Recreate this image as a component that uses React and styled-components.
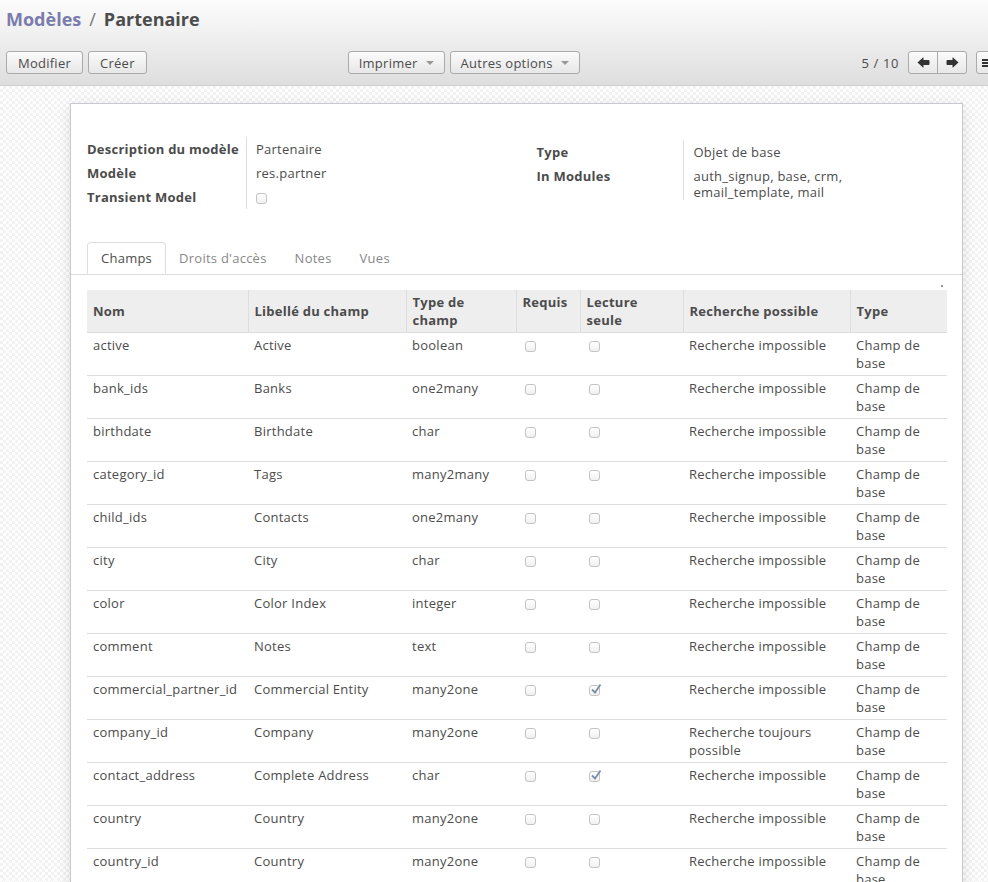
import React from "react";
import styled, { createGlobalStyle } from "styled-components";

const GlobalStyle = createGlobalStyle`
  html, body { margin: 0; padding: 0; }
  body {
    font-family: "Open Sans", "DejaVu Sans", sans-serif;
    font-size: 13px;
    letter-spacing: 0.25px;
    color: #4c4c4c;
    background: #fff;
  }
`;

const Page = styled.div`
  width: 988px;
  height: 882px;
  overflow: hidden;
  display: flex;
  flex-direction: column;
`;

const Header = styled.div`
  height: 86px;
  flex: none;
  box-sizing: border-box;
  background: linear-gradient(#fcfcfc, #dedede);
  border-bottom: 1px solid #cfcfcf;
  padding: 6px 0 0 6px;
`;

const Breadcrumb = styled.div`
  font-size: 18px;
  font-weight: 700;
  line-height: 26px;
  letter-spacing: 0;
  display: flex;
  gap: 8px;
`;

const Crumb = styled.span`
  font-weight: ${({ $sep }) => ($sep ? 400 : 700)};
  color: ${({ $link, $sep }) => ($link ? "#7c7bad" : $sep ? "#777" : "#4c4c4c")};
`;

const Toolbar = styled.div`
  margin-top: 19px;
  display: flex;
  align-items: center;
`;

const Group = styled.div`
  display: flex;
  gap: 5px;
  align-items: center;
  margin-left: ${({ $ml }) => $ml || 0}px;
`;

const Button = styled.button`
  height: 23px;
  box-sizing: border-box;
  padding: 0 ${({ $pad }) => $pad || 11}px;
  font-family: inherit;
  font-size: 13px;
  letter-spacing: 0.25px;
  color: #4c4c4c;
  background: linear-gradient(#fbfbfb, #e7e7e7);
  border: 1px solid #aaa;
  border-radius: 3px;
  display: flex;
  align-items: center;
  gap: 8px;
  cursor: pointer;
`;

const Caret = styled.span`
  width: 0;
  height: 0;
  border-left: 4px solid transparent;
  border-right: 4px solid transparent;
  border-top: 4px solid #999;
  margin-top: 1px;
`;

const Pager = styled.div`
  margin-left: auto;
  display: flex;
  align-items: center;
  gap: 9px;
`;

const PagerText = styled.span`
  font-size: 13px;
  letter-spacing: 0.6px;
  color: #4c4c4c;
`;

const NavGroup = styled.div`
  display: flex;
  height: 23px;
  border: 1px solid #aaa;
  border-radius: 3px;
  overflow: hidden;
  box-sizing: border-box;
  background: linear-gradient(#fbfbfb, #e7e7e7);
`;

const NavBtn = styled.div`
  width: 28px;
  display: flex;
  align-items: center;
  justify-content: center;
  border-left: ${({ $first }) => ($first ? "none" : "1px solid #aaa")};
`;

const ViewBtn = styled.div`
  width: 30px;
  height: 23px;
  box-sizing: border-box;
  border: 1px solid #aaa;
  border-radius: 3px;
  background: linear-gradient(#fbfbfb, #e7e7e7);
  margin-right: -18px;
  display: flex;
  align-items: center;
  padding-left: 5px;
`;

const Body = styled.div`
  flex: 1;
  background-color: #fff;
  background-image: repeating-conic-gradient(#f2f2f2 0 25%, #ffffff 0 50%);
  background-size: 6px 6px;
  padding: 17px 24px 0 70px;
`;

const Sheet = styled.div`
  width: 893px;
  height: 820px;
  box-sizing: border-box;
  background: #fff;
  border: 1px solid #c8c8d0;
  box-shadow: 0 4px 14px rgba(0, 0, 0, 0.12);
  padding-top: 33px;
`;

const InfoRow = styled.div`
  display: flex;
  padding: 0 16px 0 16px;
`;

const InfoGroup = styled.div`
  display: grid;
  grid-template-columns: ${({ $cols }) => $cols};
  width: ${({ $w }) => $w}px;
  margin-top: ${({ $top }) => $top || 0}px;
  align-self: flex-start;
`;

const InfoLabel = styled.div`
  font-weight: 700;
  line-height: 24px;
  border-right: 1px solid #ddd;
  white-space: nowrap;
`;

const InfoValue = styled.div`
  padding-left: 9px;
  line-height: ${({ $lh }) => $lh || 24}px;
  display: flex;
  align-items: ${({ $top }) => ($top ? "flex-start" : "center")};
  padding-top: ${({ $pt }) => $pt || 0}px;
`;

const Check = styled.span`
  display: inline-block;
  width: 11px;
  height: 11px;
  box-sizing: border-box;
  border: 1px solid #c4c4c4;
  border-radius: 3px;
  background: linear-gradient(#fff, #f0f0f0);
  position: relative;
  vertical-align: middle;
`;

const Tick = styled.svg`
  position: absolute;
  left: 0px;
  top: -3px;
`;

const Tabs = styled.div`
  margin-top: 33px;
  display: flex;
  padding-left: 16px;
  border-bottom: 1px solid #ddd;
  height: 32px;
`;

const Tab = styled.div`
  padding: 0 ${({ $active }) => ($active ? 13 : 12)}px;
  line-height: 31px;
  color: ${({ $active }) => ($active ? "#4c4c4c" : "#888")};
  border: 1px solid ${({ $active }) => ($active ? "#ddd" : "transparent")};
  border-bottom: ${({ $active }) => ($active ? "1px solid #fff" : "none")};
  border-radius: 4px 4px 0 0;
  background: #fff;
  height: 32px;
  box-sizing: border-box;
  margin-right: ${({ $active }) => ($active ? 0 : 2)}px;
`;

const TableWrap = styled.div`
  padding: 15px 16px 0 16px;
  position: relative;
`;

const Dot = styled.span`
  position: absolute;
  right: 19px;
  top: 10px;
  width: 2px;
  height: 2px;
  background: #999;
`;

const Table = styled.table`
  width: 860px;
  border-collapse: collapse;
  table-layout: fixed;
`;

const Th = styled.th`
  text-align: left;
  font-weight: 700;
  background: #eee;
  line-height: 18px;
  padding: 3px 6px;
  height: 36px;
  border-left: ${({ $first }) => ($first ? "none" : "1px solid #ddd")};
  border-bottom: 1px solid #ddd;
  vertical-align: ${({ $top }) => ($top ? "top" : "middle")};
`;

const Td = styled.td`
  line-height: 18px;
  padding: 3px 6px 3px ${({ $cb }) => ($cb ? 9 : 6)}px;
  height: 36px;
  vertical-align: top;
  border-bottom: 1px solid #ddd;
`;

const ArrowIcon = ({ dir }) => (
  <svg width="13" height="11" viewBox="0 0 13 11">
    <g transform={dir === "right" ? "translate(13,0) scale(-1,1)" : undefined}>
      <path
        d="M0.5 5.5 L6 0.5 L6.5 0.5 L6.5 3 L11.5 3 Q12.5 3 12.5 4 L12.5 7 Q12.5 8 11.5 8 L6.5 8 L6.5 10.5 L6 10.5 Z"
        fill="#333"
      />
    </g>
  </svg>
);

const Box = ({ checked }) => (
  <Check>
    {checked && (
      <Tick width="12" height="12" viewBox="0 0 12 12">
        <path d="M2 6.5 L5 9.5 L10.5 1.5" stroke="#7d8ea8" strokeWidth="1.8" fill="none" />
      </Tick>
    )}
  </Check>
);

const fields = [
  ["active", "Active", "boolean", false, false, "Recherche impossible"],
  ["bank_ids", "Banks", "one2many", false, false, "Recherche impossible"],
  ["birthdate", "Birthdate", "char", false, false, "Recherche impossible"],
  ["category_id", "Tags", "many2many", false, false, "Recherche impossible"],
  ["child_ids", "Contacts", "one2many", false, false, "Recherche impossible"],
  ["city", "City", "char", false, false, "Recherche impossible"],
  ["color", "Color Index", "integer", false, false, "Recherche impossible"],
  ["comment", "Notes", "text", false, false, "Recherche impossible"],
  ["commercial_partner_id", "Commercial Entity", "many2one", false, true, "Recherche impossible"],
  ["company_id", "Company", "many2one", false, false, "Recherche toujours possible"],
  ["contact_address", "Complete Address", "char", false, true, "Recherche impossible"],
  ["country", "Country", "many2one", false, false, "Recherche impossible"],
  ["country_id", "Country", "many2one", false, false, "Recherche impossible"],
];

export default function App() {
  return (
    <Page>
      <GlobalStyle />
      <Header>
        <Breadcrumb>
          <Crumb $link>Modèles</Crumb>
          <Crumb $sep>/</Crumb>
          <Crumb>Partenaire</Crumb>
        </Breadcrumb>
        <Toolbar>
          <Group>
            <Button>Modifier</Button>
            <Button>Créer</Button>
          </Group>
          <Group $ml={201}>
            <Button $pad={10}>Imprimer <Caret /></Button>
            <Button $pad={10}>Autres options <Caret /></Button>
          </Group>
          <Pager>
            <PagerText>5 / 10</PagerText>
            <NavGroup>
              <NavBtn $first><ArrowIcon dir="left" /></NavBtn>
              <NavBtn><ArrowIcon dir="right" /></NavBtn>
            </NavGroup>
            <ViewBtn>
              <svg width="10" height="10" viewBox="0 0 10 10">
                <rect x="0" y="1" width="10" height="2" fill="#333" />
                <rect x="0" y="4" width="10" height="2" fill="#333" />
                <rect x="0" y="7" width="10" height="2" fill="#333" />
              </svg>
            </ViewBtn>
          </Pager>
        </Toolbar>
      </Header>
      <Body>
        <Sheet>
          <InfoRow>
            <InfoGroup $cols="160px 1fr" $w={450}>
              <InfoLabel>Description du modèle</InfoLabel>
              <InfoValue>Partenaire</InfoValue>
              <InfoLabel>Modèle</InfoLabel>
              <InfoValue>res.partner</InfoValue>
              <InfoLabel>Transient Model</InfoLabel>
              <InfoValue $pt={3}><Box /></InfoValue>
            </InfoGroup>
            <InfoGroup $cols="148px 1fr" $w={410} $top={3}>
              <InfoLabel>Type</InfoLabel>
              <InfoValue>Objet de base</InfoValue>
              <InfoLabel>In Modules</InfoLabel>
              <InfoValue $lh={16} $top $pt={4}>
                auth_signup, base, crm,<br />email_template, mail
              </InfoValue>
            </InfoGroup>
          </InfoRow>
          <Tabs>
            <Tab $active>Champs</Tab>
            <Tab>Droits d'accès</Tab>
            <Tab>Notes</Tab>
            <Tab>Vues</Tab>
          </Tabs>
          <TableWrap>
            <Dot />
            <Table>
              <colgroup>
                <col style={{ width: 161 }} />
                <col style={{ width: 158 }} />
                <col style={{ width: 110 }} />
                <col style={{ width: 64 }} />
                <col style={{ width: 103 }} />
                <col style={{ width: 167 }} />
                <col style={{ width: 97 }} />
              </colgroup>
              <thead>
                <tr>
                  <Th $first>Nom</Th>
                  <Th>Libellé du champ</Th>
                  <Th>Type de<br />champ</Th>
                  <Th $top>Requis</Th>
                  <Th>Lecture<br />seule</Th>
                  <Th>Recherche possible</Th>
                  <Th>Type</Th>
                </tr>
              </thead>
              <tbody>
                {fields.map((f) => (
                  <tr key={f[0]}>
                    <Td>{f[0]}</Td>
                    <Td>{f[1]}</Td>
                    <Td>{f[2]}</Td>
                    <Td $cb><Box checked={f[3]} /></Td>
                    <Td $cb><Box checked={f[4]} /></Td>
                    <Td>{f[5]}</Td>
                    <Td>Champ de base</Td>
                  </tr>
                ))}
              </tbody>
            </Table>
          </TableWrap>
        </Sheet>
      </Body>
    </Page>
  );
}
